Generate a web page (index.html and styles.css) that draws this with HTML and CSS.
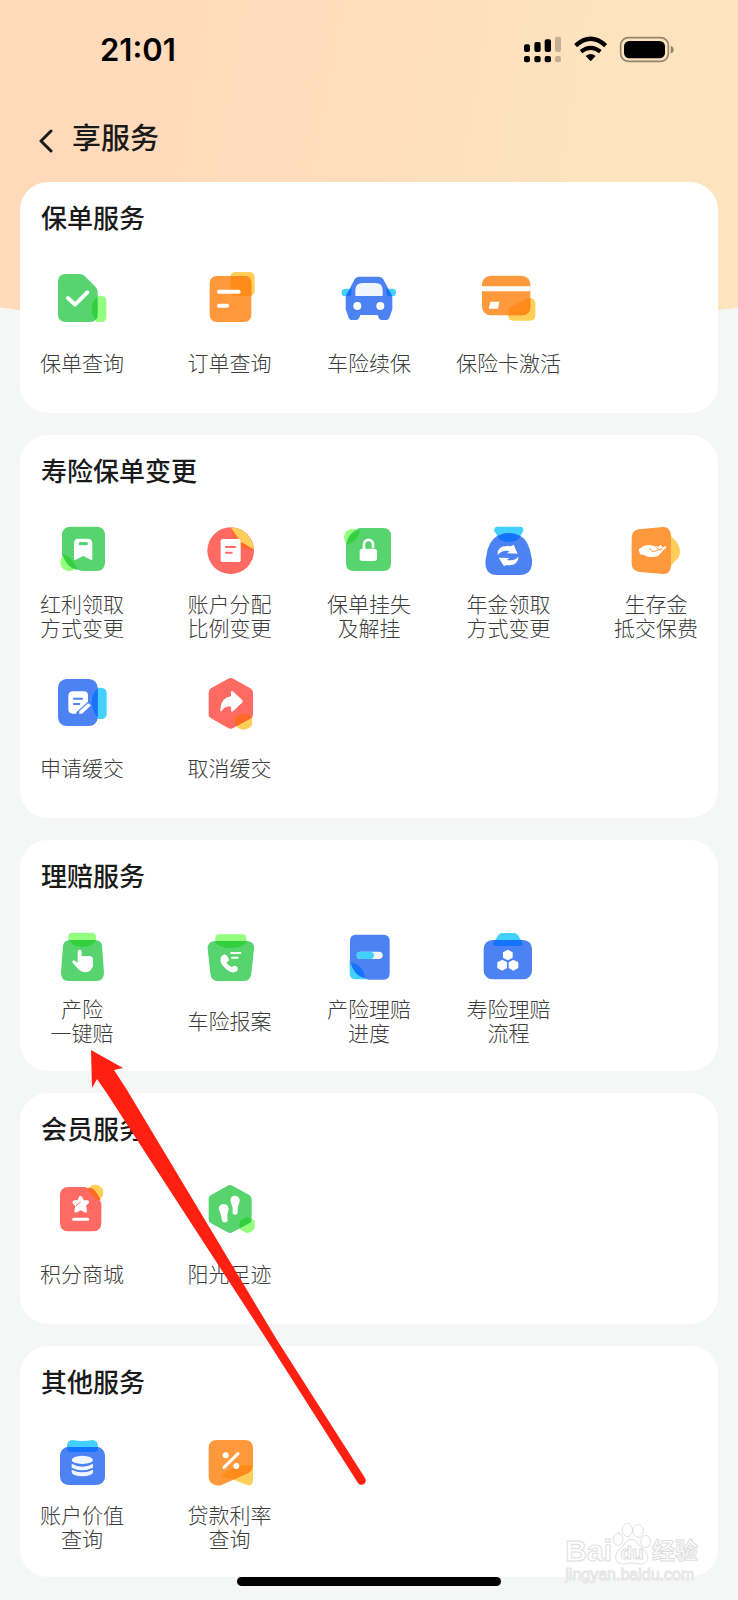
FILE: index.html
```html
<!DOCTYPE html>
<html lang="zh-CN">
<head>
<meta charset="utf-8">
<meta name="viewport" content="width=device-width, initial-scale=1">
<title>享服务</title>
<link rel="stylesheet" href="styles.css">
</head>
<body>
<div class="page">
  <div class="status">
    <span class="time">21:01</span>
    <svg class="status-icons" viewBox="60 40 480 100" aria-hidden="true">
      <rect x="72" y="73" width="18" height="23" rx="6"/><rect x="103" y="66" width="19" height="30" rx="6"/><rect x="134" y="58" width="19" height="38" rx="6"/>
      <rect x="72" y="108" width="18" height="19" rx="6"/><rect x="103" y="108" width="19" height="19" rx="6"/><rect x="134" y="108" width="19" height="19" rx="6"/>
      <g opacity=".22"><rect x="165" y="50" width="18" height="46" rx="6"/><rect x="165" y="108" width="18" height="19" rx="6"/></g>
      <g fill="none" stroke="#000" stroke-width="13"><path d="M227 77Q272 36 317 77"/><path d="M243 95Q272 72 301 95" stroke-width="12"/></g>
      <path d="M257 108Q272 96 287 108L272 124Z"/>
      <rect x="362" y="53" width="143" height="71" rx="23" fill="none" stroke="#000" stroke-opacity=".42" stroke-width="5"/>
      <path d="M512 78Q521 80 521 89T512 100Z" fill-opacity=".42"/>
      <rect x="372" y="63" width="123" height="52" rx="16"/>
    </svg>
  </div>
  <header class="header">
    <button class="back" type="button" aria-label="返回">
      <svg viewBox="0 0 14 24"><path d="M12 2L2 12L12 22"/></svg>
    </button>
    <h1>享服务</h1>
  </header>

  <main class="cards">
    <section class="card">
      <h2>保单服务</h2>
      <div class="grid">
        <a class="item" href="#">
          <svg class="icon" viewBox="96 93 180 180">
            <clipPath id="c1"><path d="M138 105H178Q187 105 194 111L222 139Q233 149 233 161V226Q233 249 210 249H138Q114 249 114 226V128Q114 105 138 105Z"/></clipPath>
            <path class="lime" d="M233 171H244Q259 171 259 187V233Q259 249 244 249H228Z"/>
            <path class="green" d="M138 105H178Q187 105 194 111L222 139Q233 149 233 161V226Q233 249 210 249H138Q114 249 114 226V128Q114 105 138 105Z"/>
            <g clip-path="url(#c1)"><ellipse class="green-mix" cx="242" cy="210" rx="27" ry="38"/></g>
            <path class="line" stroke-width="12" d="M144 177L165 197L202 160"/>
          </svg>
          <span class="label">保单查询</span>
        </a>
        <a class="item" href="#">
          <svg class="icon" viewBox="538 93 180 180">
            <rect class="yellow" x="632" y="99" width="73" height="72" rx="15"/>
            <rect class="orange" x="570" y="111" width="125" height="138" rx="20"/>
            <path class="orange-mix" d="M633 111H675Q695 111 695 131V171H647Q633 171 633 157Z"/>
            <path class="line" stroke-width="12" d="M598 158H657M598 200H622"/>
          </svg>
          <span class="label">订单查询</span>
        </a>
        <a class="item" href="#">
          <svg class="icon" viewBox="57 93 180 180">
            <rect class="cyan" x="65" y="149" width="163" height="23" rx="11"/>
            <path class="blue" d="M117 113H177Q185 113 190 121L207 153Q217 165 217 177V211L209 233Q206 243 197 243H185Q177 243 173 228H121Q117 243 108 243H96Q88 243 85 233L77 211V177Q77 165 87 153L104 121Q108 113 117 113Z"/>
            <path class="blue-mix" d="M93 147Q98 157 91 172H78Q81 160 93 147ZM201 147Q196 157 203 172H216Q213 160 201 147Z"/>
            <path class="pale" d="M106 171V154Q106 132 128 132H166Q188 132 188 154V171Z"/>
            <circle class="white" cx="112" cy="201" r="12"/><circle class="white" cx="181" cy="201" r="12"/>
          </svg>
          <span class="label">车险续保</span>
        </a>
        <a class="item" href="#">
          <svg class="icon" viewBox="476 93 180 180">
            <rect class="yellow" x="563" y="177" width="82" height="68" rx="15"/>
            <rect class="orange" x="485" y="110" width="145" height="119" rx="26"/>
            <path class="orange-mix" d="M630 177V203Q630 229 604 229H564V215Q565 205 575 202L607 185Q615 177 630 177Z"/>
            <path class="white" d="M485 142H630V157H485ZM510 188H537L533 209H505Z"/>
          </svg>
          <span class="label">保险卡激活</span>
        </a>
      </div>
    </section>

    <section class="card">
      <h2>寿险保单变更</h2>
      <div class="grid">
        <a class="item" href="#">
          <svg class="icon" viewBox="96 72 180 180">
            <circle class="lime" cx="147" cy="190" r="26"/>
            <path class="green" d="M152 83H229Q255 83 255 109V190Q255 216 229 216H185Q148 210 126 168V109Q126 83 152 83Z"/>
            <path class="green-mix" d="M128 167Q158 170 171 213Q140 206 128 167Z"/>
            <path class="white" fill-rule="evenodd" d="M174 119H203Q217 119 217 133V181Q217 185 212 182L190 171L167 182Q162 185 162 180V133Q162 119 174 119ZM181 129A4 4 0 0 0 181 139H199A4 4 0 0 0 199 129Z"/>
          </svg>
          <span class="label">红利领取<br>方式变更</span>
        </a>
        <a class="item" href="#">
          <svg class="icon" viewBox="538 72 180 180">
            <circle class="red" cx="633" cy="155" r="70"/>
            <path class="yellow" d="M633 85A70 70 0 0 1 702 150L668 135Z"/>
            <path class="red-mix" d="M633 87L641 118L662 121V145L700 154Q684 137 663 130Q646 115 633 87Z"/>
            <rect class="white" x="603" y="120" width="60" height="69" rx="5"/>
            <path class="line red-line" stroke-width="6" d="M619 144H647M619 161H636"/>
          </svg>
          <span class="label">账户分配<br>比例变更</span>
        </a>
        <a class="item" href="#">
          <svg class="icon" viewBox="957 72 180 180">
            <circle class="lime" cx="998" cy="115" r="26"/>
            <path class="green" d="M1018 87H1089Q1113 87 1113 111V192Q1113 216 1089 216H1002Q978 216 978 192V134Q986 98 1018 87Z"/>
            <path class="green-mix" d="M1020 94Q1013 130 979 137Q987 101 1020 94Z"/>
            <rect class="white" x="1019" y="149" width="52" height="37" rx="8"/>
            <path class="line" stroke-width="8" d="M1032 150V136A13 13 0 0 1 1059 136V143"/>
          </svg>
          <span class="label">保单挂失<br>及解挂</span>
        </a>
        <a class="item" href="#">
          <svg class="icon" viewBox="236 72 180 180">
            <path class="cyan" d="M292 83H359Q370 83 369 95L360 112H292L282 97Q280 83 292 83Z"/>
            <path class="blue" d="M307 104Q325 100 343 104Q377 111 388 150L395 181Q398 227 359 228H289Q251 226 256 181L262 150Q275 111 307 104Z"/>
            <path class="blue-mix" d="M292 112Q325 92 360 112Q353 129 325 129T292 112Z"/>
            <path class="white" d="M292 168Q290 136 332 142L340 137L352 164L320 163L328 157Q308 151 292 168ZM355 173Q352 203 318 198L311 202L295 176L327 177L320 183Q340 187 355 173Z"/>
          </svg>
          <span class="label">年金领取<br>方式变更</span>
        </a>
        <a class="item" href="#">
          <svg class="icon" viewBox="678 72 180 180">
            <path class="yellow" d="M812 110L825 123Q839 138 840 158Q840 174 827 184L812 202Z"/>
            <path class="orange" d="M716 91L789 84Q809 83 813 108V202Q810 227 789 225L719 219Q695 216 695 193V116Q696 94 716 91Z"/>
            <path class="white" d="M716 151L732 140Q751 135 760 141L777 143L780 137L789 145L798 141V146L774 171Q760 176 743 173L732 168L720 166Z"/>
            <path class="orange-line" d="M748 147L756 157Q769 158 777 152M769 146L781 153L788 145"/>
          </svg>
          <span class="label">生存金<br>抵交保费</span>
        </a>
        <a class="item" href="#">
          <svg class="icon" viewBox="96 48 180 180">
            <rect class="cyan" x="215" y="86" width="45" height="94" rx="16"/>
            <rect class="blue" x="114" y="60" width="119" height="141" rx="26"/>
            <path class="blue-mix" d="M233 88V176Q218 158 215 133Q216 103 233 88Z"/>
            <path class="white" d="M158 97H192Q205 97 204 111V164H158Q145 164 145 151V111Q145 97 158 97Z"/>
            <path class="blue" d="M206 126L169 160V168H206Z"/>
            <path class="white" d="M178 156L204 133L213 139L188 163L178 166Z"/>
            <path class="line blue-line" stroke-width="6" d="M162 119H186M162 135H178"/>
          </svg>
          <span class="label">申请缓交</span>
        </a>
        <a class="item" href="#">
          <svg class="icon" viewBox="538 48 180 180">
            <path class="yellow" d="M672 163L697 175V197Q695 205 687 208L672 213L656 208L645 196V174Z"/>
            <path class="red" d="M624 60Q633 54 642 60L692 88Q700 92 700 101V167Q700 174 693 178L642 206Q633 212 624 206L574 178Q567 174 567 167V101Q567 92 574 88Z"/>
            <path class="red-mix" d="M672 161L697 173V176L651 201L646 194V174Z"/>
            <path class="white" d="M634 99Q635 93 641 98L667 122Q672 127 667 131L641 156Q634 162 634 153V143Q616 140 607 155Q602 161 602 151Q604 116 634 112Z"/>
          </svg>
          <span class="label">取消缓交</span>
        </a>
      </div>
    </section>

    <section class="card">
      <h2>理赔服务</h2>
      <div class="grid">
        <a class="item" href="#">
          <svg class="icon" viewBox="96 54 180 180">
            <rect class="lime" x="145" y="68" width="83" height="36" rx="12"/>
            <path class="green" d="M151 90H225Q244 90 246 108L252 188Q252 213 229 213H146Q123 213 123 188L129 108Q131 90 151 90Z"/>
            <path class="green-mix" d="M147 90H228Q220 110 188 111Q155 110 147 90Z"/>
            <path class="white" d="M173 126Q173 119 179 119T185 126V139L210 138Q219 140 219 148V169L210 183Q195 191 178 181L159 160Q153 153 162 151L173 158Z"/>
          </svg>
          <span class="label">产险<br>一键赔</span>
        </a>
        <a class="item" href="#">
          <svg class="icon" viewBox="538 54 180 180">
            <rect class="lime" x="587" y="73" width="93" height="36" rx="12"/>
            <path class="green" d="M585 93H682Q705 95 703 116L695 190Q692 213 674 213H594Q574 213 572 190L564 116Q563 96 585 93Z"/>
            <path class="green-mix" d="M586 93H681Q675 113 634 114Q592 113 586 93Z"/>
            <path class="white" d="M607 137Q615 130 622 137L628 148Q629 155 620 157Q625 168 637 172Q642 164 651 169Q658 178 651 184Q638 193 620 178Q599 160 603 143Z"/>
            <path class="line" stroke-width="6" d="M635 129H662M637 143H654"/>
          </svg>
          <span class="label">车险报案</span>
        </a>
        <a class="item" href="#">
          <svg class="icon" viewBox="57 54 180 180">
            <path class="cyan" d="M89 150L140 208H108Q89 208 89 190Z"/>
            <path class="blue" d="M107 74H190Q209 74 209 94V190Q209 209 190 209H145Q105 199 90 160V94Q90 74 107 74Z"/>
            <path class="blue-mix" d="M93 158Q126 161 136 203Q105 201 93 158Z"/>
            <rect class="pale" x="110" y="125" width="78" height="22" rx="11"/>
            <path class="cyan" d="M121 125H152Q162 127 162 136T152 147H121A11 11 0 0 1 121 125Z"/>
          </svg>
          <span class="label">产险理赔<br>进度</span>
        </a>
        <a class="item" href="#">
          <svg class="icon" viewBox="476 54 180 180">
            <path class="cyan" d="M544 69H582Q592 71 600 87L607 98H518L527 87Q535 70 544 69Z"/>
            <rect class="blue" x="490" y="90" width="145" height="118" rx="26"/>
            <path class="blue-mix" d="M523 90H603L607 101Q606 108 598 108H528Q518 107 518 100Z"/>
            <path class="white" d="M562 119L577 127V143L562 151L548 143V127ZM546 149L560 157V174L546 182L531 174V157ZM579 149L594 157V174L579 182L565 174V157Z"/>
          </svg>
          <span class="label">寿险理赔<br>流程</span>
        </a>
      </div>
    </section>

    <section class="card">
      <h2>会员服务</h2>
      <div class="grid">
        <a class="item" href="#">
          <svg class="icon" viewBox="96 273 180 180">
            <circle class="yellow" cx="226" cy="308" r="24"/>
            <path class="red" d="M146 291H195Q224 300 244 339V398Q244 424 218 424H146Q120 424 120 398V317Q120 291 146 291Z"/>
            <path class="red-mix" d="M202 295Q222 285 242 331Q219 331 202 295Z"/>
            <path class="white" d="M177 320Q182 314 187 322L191 331H202Q210 333 206 340L198 347L201 363Q200 370 193 367L182 361L171 367Q163 370 163 362L166 349L158 340Q156 333 164 331H173Z"/>
            <path class="line" stroke-width="9" d="M161 388H203"/>
            <path class="red-line" fill="none" stroke-width="3" d="M168 347L182 336"/>
          </svg>
          <span class="label">积分商城</span>
        </a>
        <a class="item" href="#">
          <svg class="icon" viewBox="538 273 180 180">
            <path class="lime" d="M682 381L705 392V414Q703 424 682 430L659 417V392Z"/>
            <path class="green" d="M624 287Q631 283 638 287L689 315Q696 319 696 327V388Q696 396 689 400L638 427Q631 431 624 427L574 400Q567 396 567 388V327Q567 319 574 315Z"/>
            <path class="green-mix" d="M682 380L696 388L693 397L660 415V393Z"/>
            <path class="white" d="M597 356Q599 342 612 342Q627 343 627 357L623 374L624 392Q620 400 610 396Q606 393 604 376ZM632 332Q633 317 646 317Q661 318 660 334L654 355V370Q649 378 639 371L639 353Z"/>
          </svg>
          <span class="label">阳光足迹</span>
        </a>
      </div>
    </section>

    <section class="card">
      <h2>其他服务</h2>
      <div class="grid">
        <a class="item" href="#">
          <svg class="icon" viewBox="96 279 180 180">
            <path class="cyan" d="M157 297Q187 303 217 297Q234 298 234 317V325H141V315Q142 299 157 297Z"/>
            <rect class="blue" x="120" y="318" width="135" height="114" rx="25"/>
            <path class="blue-mix" d="M141 318H234V324Q234 333 224 333H151Q141 333 141 324Z"/>
            <path class="pale" d="M155 358Q157 345 187 344Q217 345 219 358Q217 368 187 369Q157 368 155 358ZM155 368Q171 377 187 377T219 368V380Q202 388 187 388T155 380ZM155 386Q171 394 187 394T219 386V394Q217 405 187 406Q157 405 155 394Z"/>
          </svg>
          <span class="label">账户价值<br>查询</span>
        </a>
        <a class="item" href="#">
          <svg class="icon" viewBox="538 279 180 180">
            <path class="yellow" d="M700 370V420Q698 435 684 433L641 416Z"/>
            <path class="orange" d="M593 297H675Q700 297 700 322V372Q699 389 684 397L608 431Q594 437 581 430Q567 423 567 408V322Q567 297 593 297Z"/>
            <path class="orange-mix" d="M606 402L645 378Q672 369 698 374Q699 389 684 397L644 415Q620 415 606 402Z"/>
            <path class="line" stroke-width="9" d="M613 379L655 338"/>
            <circle class="white" cx="618" cy="343" r="9"/><circle class="white" cx="650" cy="375" r="9"/>
          </svg>
          <span class="label">贷款利率<br>查询</span>
        </a>
      </div>
    </section>
  </main>

  <svg class="arrow" viewBox="90 1048 280 440" aria-hidden="true">
    <path d="M91 1050L123 1068L114 1070L127 1090L277 1340L365 1478A4 4 0 0 1 358 1483L267 1340L106 1092L97 1079L92 1088Z"/>
  </svg>

  <div class="watermark" aria-hidden="true">
    <div class="brand">
      <span>Bai</span>
      <span class="paw">
        <svg viewBox="390 115 125 135"><ellipse cx="409" cy="171" rx="15" ry="19"/><ellipse cx="438" cy="142" rx="16" ry="21"/><ellipse cx="472" cy="145" rx="16" ry="20"/><ellipse cx="495" cy="178" rx="15" ry="19"/><path d="M450 171Q466 171 474 190Q502 210 502 228Q500 249 478 248Q450 242 425 248Q402 249 401 226Q402 209 425 192Q435 171 450 171Z"/></svg>
        <span class="du">du</span>
      </span>
      <span class="cn">经验</span>
    </div>
    <div class="url">jingyan.baidu.com</div>
  </div>
  <div class="home-bar"></div>
</div>
</body>
</html>
```
FILE: styles.css
```css
* { box-sizing: border-box; }
body {
  margin: 0;
  background: #f5f7f7;
  font-family: "Liberation Sans", "Noto Sans CJK SC", sans-serif;
}
.page {
  position: relative;
  min-height: 100vh;
  padding-bottom: 23px;
  overflow: hidden;
}
.page::before {
  content: "";
  position: absolute;
  inset: 0 0 auto;
  height: 333px;
  background: linear-gradient(100deg, #ffd9ba 0%, #ffddbd 45%, #fee3bf 75%, #fde4be 100%);
  clip-path: ellipse(130% 100% at 50% 0);
}
.status, .header, .cards { position: relative; }

.status {
  display: flex;
  align-items: center;
  justify-content: space-between;
  height: 100px;
  padding: 0 58px 0 100px;
}
.time { font: 600 31px/36px Inter, sans-serif; }
.status-icons { width: 160px; height: 34px; }

.header {
  display: flex;
  align-items: center;
  gap: 19px;
  height: 82px;
  padding: 0 39px 4px;
}
.back {
  display: flex;
  padding: 4px 0 0;
  border: 0;
  background: none;
}
.back svg {
  width: 14px;
  height: 24px;
  fill: none;
  stroke: #1d1a17;
  stroke-width: 3;
  stroke-linecap: round;
  stroke-linejoin: round;
}
h1, h2 { margin: 0; font-weight: 500; color: #1a1a1a; }
h1 { font-size: 29px; line-height: 40px; }
h2 { padding: 0 21px; font-size: 26px; line-height: 40px; }

.cards {
  display: flex;
  flex-direction: column;
  gap: 22px;
  padding: 0 20px;
}
.card {
  padding: 17px 0 25px;
  border-radius: 28px;
  background: #fff;
}
.grid {
  display: grid;
  grid-template-columns: repeat(5, 1fr);
  row-gap: 34px;
  margin-top: 31px;
}
.item {
  display: flex;
  flex-direction: column;
  align-items: center;
  justify-self: center;
  gap: 10px;
  min-width: 84px;
  color: #3c3c3c;
  text-decoration: none;
}
.item:nth-child(5n + 1) { justify-self: start; margin-left: 20px; }
.item:nth-child(5n) { justify-self: end; margin-right: 20px; }
.label {
  display: flex;
  align-items: center;
  height: 48px;
  font-size: 21px;
  font-weight: 300;
  line-height: 24px;
  text-align: center;
  white-space: nowrap;
}
.icon { width: 60px; height: 60px; overflow: visible; }

.green { fill: #57d46d; }
.lime { fill: #94ff7f; }
.green-mix { fill: #31d03c; }
.orange { fill: #ff993b; }
.yellow { fill: #ffcf5a; }
.orange-mix { fill: #ff8c1a; }
.blue { fill: #4d82f3; }
.cyan { fill: #42d0ff; }
.blue-mix { fill: #1473fa; }
.red { fill: #ff6b63; }
.red-mix { fill: #ff6b26; }
.white { fill: #fff; }
.pale { fill: #f0f5ff; }
.line { fill: none; stroke: #fff; stroke-linecap: round; stroke-linejoin: round; }
.red-line { stroke: #ff6b63; }
.blue-line { stroke: #4d82f3; }
.orange-line { fill: none; stroke: #ff993b; stroke-width: 3; }

.arrow {
  position: absolute;
  top: 1048px;
  left: 90px;
  width: 280px;
  height: 440px;
  fill: #ff2012;
  pointer-events: none;
}
.watermark {
  position: absolute;
  right: 40px;
  bottom: 15px;
  color: #fff;
  -webkit-text-stroke: 1px #dedede;
}
.brand {
  display: flex;
  align-items: flex-end;
  font-size: 30px;
  font-weight: 700;
  line-height: 28px;
}
.paw { position: relative; display: flex; }
.paw svg { width: 40px; height: 44px; fill: #fff; stroke: #dedede; stroke-width: 3; }
.du {
  position: absolute;
  inset: auto 0 0;
  font-size: 19px;
  line-height: 24px;
  text-align: center;
}
.cn { font-size: 23px; }
.url { font-size: 16px; line-height: 20px; -webkit-text-stroke: 1px #e4e4e4; }
.home-bar {
  position: absolute;
  bottom: 14px;
  left: 50%;
  width: 264px;
  height: 9px;
  border-radius: 5px;
  background: #000;
  transform: translateX(-50%);
}
```
